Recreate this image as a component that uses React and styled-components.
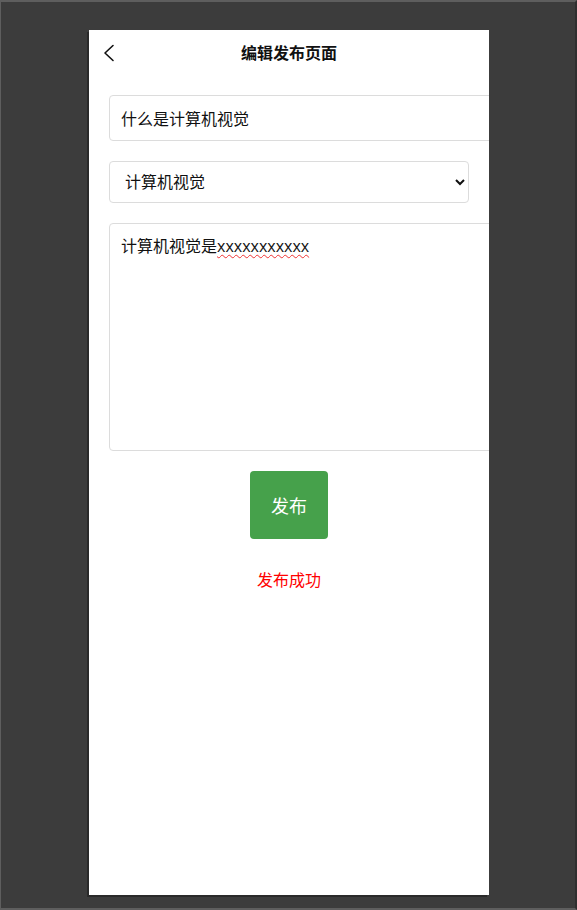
import React from 'react';
import styled, { createGlobalStyle } from 'styled-components';

const GlobalStyle = createGlobalStyle`
  html, body {
    margin: 0;
    padding: 0;
    background: #3c3c3c;
  }
  * {
    box-sizing: border-box;
  }
`;

const BackIcon = () => (
  <svg xmlns="http://www.w3.org/2000/svg" viewBox="0 0 12 18" width="12" height="18" fill="none" stroke="#111" strokeWidth="1.6" strokeLinecap="round" strokeLinejoin="round">
    <path d="M10 1.5L2 9l8 7.5" />
  </svg>
);

const Workspace = styled.div`
  width: 577px;
  height: 910px;
  background: #3c3c3c;
  border-top: 2px solid #5e5e5e;
  border-left: 1px solid #5e5e5e;
  border-bottom: 2px solid #5e5e5e;
  border-right: 2px solid #2f2f2f;
  padding: 28px 0 0 88px;
  font-family: "Open Sans", "Noto Sans CJK SC", sans-serif;
`;

const Phone = styled.div`
  width: 400px;
  height: 865px;
  background: #fff;
  overflow: hidden;
  box-shadow: -2px 2px 0 #2a2a2a;
  display: flex;
  flex-direction: column;
`;

const Header = styled.header`
  height: 46px;
  display: grid;
  grid-template-columns: 40px 1fr 40px;
  align-items: center;
`;

const BackButton = styled.button`
  border: none;
  background: none;
  padding: 0 0 0 14px;
  height: 46px;
  display: flex;
  align-items: center;
  cursor: pointer;
`;

const Title = styled.h1`
  margin: 0;
  text-align: center;
  font-size: 16px;
  font-weight: 700;
  color: #111;
  line-height: 46px;
`;

const Form = styled.div`
  padding: 19px 20px 0;
  display: flex;
  flex-direction: column;
  gap: 20px;
`;

const TitleInput = styled.input`
  box-sizing: content-box;
  width: 100%;
  height: 20px;
  padding: 12px 11px;
  border: 1px solid #dcdcdc;
  border-radius: 4px;
  font-family: inherit;
  font-size: 16px;
  color: #111;
  outline: none;
`;

const Select = styled.select`
  width: 360px;
  height: 42px;
  padding: 0 8px 0 11px;
  border: 1px solid #dcdcdc;
  border-radius: 4px;
  background: #fff;
  font-family: inherit;
  font-size: 16px;
  color: #111;
  outline: none;
`;

const ContentBox = styled.div`
  box-sizing: content-box;
  width: 100%;
  height: 204px;
  padding: 11px 11px;
  border: 1px solid #dcdcdc;
  border-radius: 4px;
  font-size: 16px;
  line-height: 22px;
  color: #111;
  white-space: pre-wrap;
`;

const Misspelled = styled.span`
  text-decoration: underline wavy #e33;
  text-decoration-thickness: 1px;
  text-underline-offset: 2px;
`;

const Actions = styled.div`
  display: flex;
  flex-direction: column;
  align-items: center;
`;

const PublishButton = styled.button`
  width: 78px;
  height: 68px;
  border: none;
  border-radius: 4px;
  background: #46a14b;
  color: #fff;
  font-family: inherit;
  font-size: 18px;
  cursor: pointer;
`;

const Message = styled.p`
  margin: 30px 0 0;
  font-size: 16px;
  line-height: 22px;
  color: #ff0000;
`;

const App = () => {
  return (
    <>
      <GlobalStyle />
      <Workspace>
        <Phone>
          <Header>
            <BackButton aria-label="返回"><BackIcon /></BackButton>
            <Title>编辑发布页面</Title>
            <span />
          </Header>
          <Form>
            <TitleInput defaultValue="什么是计算机视觉" />
            <Select defaultValue="cv">
              <option value="cv">计算机视觉</option>
              <option value="nlp">自然语言处理</option>
            </Select>
            <ContentBox role="textbox">
              计算机视觉是<Misspelled>xxxxxxxxxxx</Misspelled>
            </ContentBox>
            <Actions>
              <PublishButton>发布</PublishButton>
              <Message>发布成功</Message>
            </Actions>
          </Form>
        </Phone>
      </Workspace>
    </>
  );
};

export default App;
